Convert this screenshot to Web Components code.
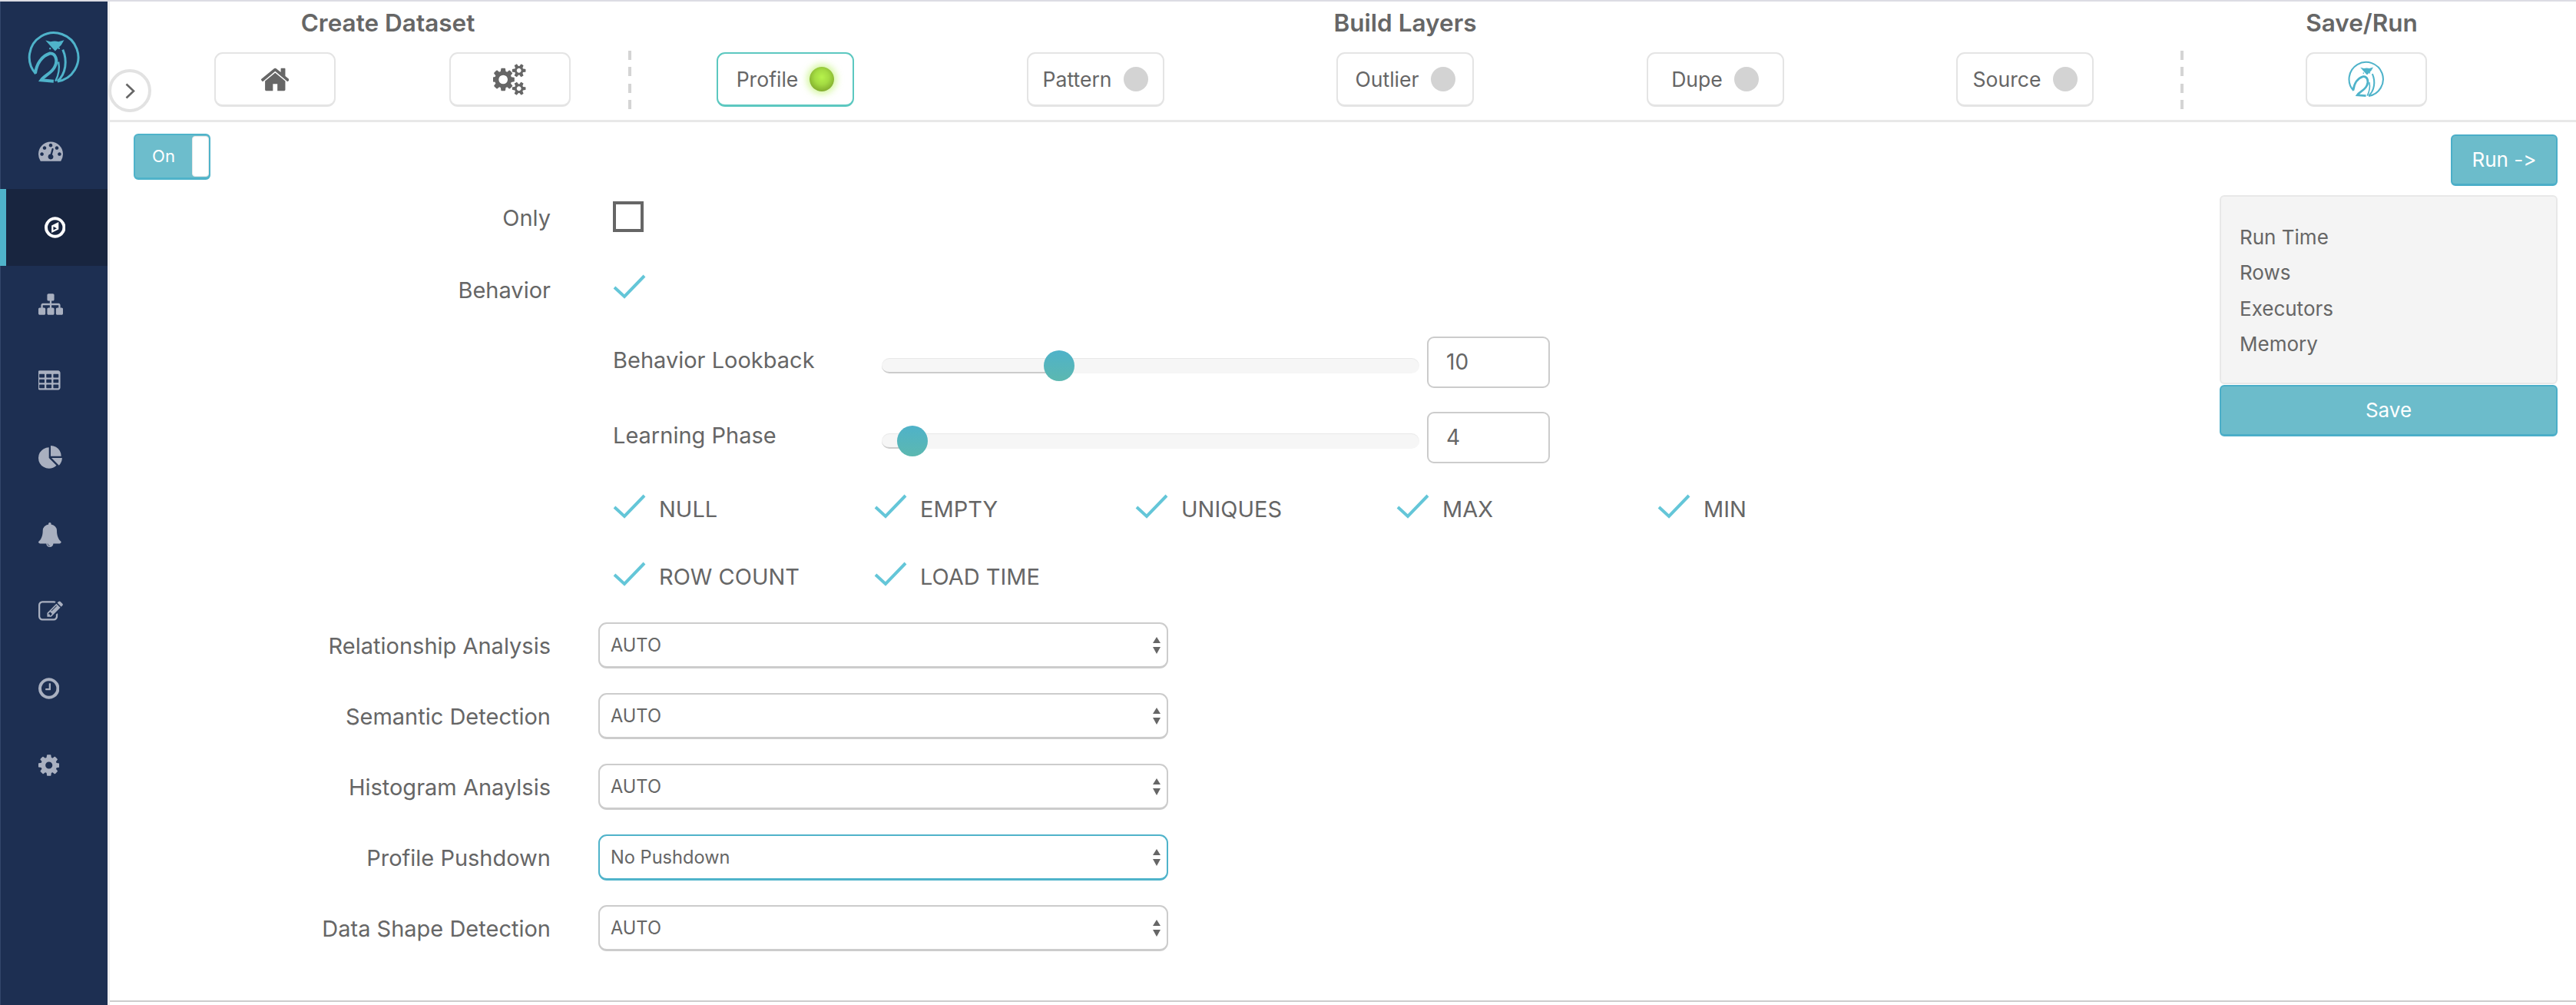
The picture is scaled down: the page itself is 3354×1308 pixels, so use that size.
<!DOCTYPE html>
<html>
<head>
<meta charset="utf-8">
<title>Profile</title>
<style>
    html, body { margin: 0; height: 100%; overflow: hidden; background: #fff; }
    body { font-family: Inter, "Liberation Sans", sans-serif; color: #666; font-variant-ligatures: none; font-feature-settings: "calt" 0, "liga" 0; }
</style>
</head>
<body>
<app-shell>
    <side-bar slot="side"></side-bar>
    <top-bar></top-bar>
    <main-body>
        <profile-form></profile-form>
        <run-panel slot="right"></run-panel>
    </main-body>
</app-shell>

<script>
// font awesome 4 glyphs, [viewBox, path, width at 1em=1792 units]
const ICONS = {
    home: ['97 0 1598 1792', 'M1472 992v480q0 26-19 45t-45 19h-384v-384h-256v384h-384q-26 0-45-19t-19-45v-480q0-1 .5-3t.5-3l575-474 575 474q1 2 1 6zm223-69l-62 74q-8 9-21 11h-3q-13 0-21-7l-692-577-692 577q-12 8-24 7-13-2-21-11l-62-74q-8-10-7-23.5t11-21.5l719-599q32-26 76-26t76 26l244 204v-195q0-14 9-23t23-9h192q14 0 23 9t9 23v408l219 182q10 8 11 21.5t-7 23.5z'],
    cogs: ['0 0 1920 1792', 'M832 896q0-106-75-181t-181-75-181 75-75 181 75 181 181 75 181-75 75-181zm768 512q0-52-38-90t-90-38-90 38-38 90q0 53 37.5 90.5t90.5 37.5 90.5-37.5 37.5-90.5zm0-1024q0-52-38-90t-90-38-90 38-38 90q0 53 37.5 90.5t90.5 37.5 90.5-37.5 37.5-90.5zm-384 421v185q0 10-7 19.5t-16 10.5l-155 24q-11 35-32 76 34 48 90 115 7 11 7 20 0 12-7 19-23 30-82.5 89.5t-78.5 59.5q-11 0-21-7l-115-90q-37 19-77 31-11 108-23 155-7 24-30 24h-186q-11 0-20-7.5t-10-17.5l-23-153q-34-10-75-31l-118 89q-7 7-20 7-11 0-21-8-144-133-144-160 0-9 7-19 10-14 41-53t47-61q-23-44-35-82l-152-24q-10-1-17-9.5t-7-19.5v-185q0-10 7-19.5t16-10.5l155-24q11-35 32-76-34-48-90-115-7-11-7-20 0-12 7-20 22-30 82-89t79-59q11 0 21 7l115 90q34-18 77-32 11-108 23-154 7-24 30-24h186q11 0 20 7.5t10 17.5l23 153q34 10 75 31l118-89q8-7 20-7 11 0 21 8 144 133 144 160 0 8-7 19-12 16-42 54t-45 60q23 48 34 82l152 23q10 2 17 10.5t7 19.5zm640 533v140q0 16-149 31-12 27-30 52 51 113 51 138 0 4-4 7-122 71-124 71-8 0-46-47t-52-68q-20 2-30 2t-30-2q-14 21-52 68t-46 47q-2 0-124-71-4-3-4-7 0-25 51-138-18-25-30-52-149-15-149-31v-140q0-16 149-31 13-29 30-52-51-113-51-138 0-4 4-7 4-2 35-20t59-34 30-16q8 0 46 46.5t52 67.5q20-2 30-2t30 2q51-71 92-112l6-2q4 0 124 70 4 3 4 7 0 25-51 138 17 23 30 52 149 15 149 31zm0-1024v140q0 16-149 31-12 27-30 52 51 113 51 138 0 4-4 7-122 71-124 71-8 0-46-47t-52-68q-20 2-30 2t-30-2q-14 21-52 68t-46 47q-2 0-124-71-4-3-4-7 0-25 51-138-18-25-30-52-149-15-149-31v-140q0-16 149-31 13-29 30-52-51-113-51-138 0-4 4-7 4-2 35-20t59-34 30-16q8 0 46 46.5t52 67.5q20-2 30-2t30 2q51-71 92-112l6-2q4 0 124 70 4 3 4 7 0 25-51 138 17 23 30 52 149 15 149 31z'],
    dashboard: ['0 0 1792 1792', 'M384 1152q0-53-37.5-90.5t-90.5-37.5-90.5 37.5-37.5 90.5 37.5 90.5 90.5 37.5 90.5-37.5 37.5-90.5zm192-448q0-53-37.5-90.5t-90.5-37.5-90.5 37.5-37.5 90.5 37.5 90.5 90.5 37.5 90.5-37.5 37.5-90.5zm428 481l101-382q6-26-7.5-48.5t-38.5-29.5-48 6.5-30 39.5l-101 382q-60 5-107 43.5t-63 98.5q-20 77 20 146t117 89 146-20 89-117q16-60-6-117t-72-91zm660-33q0-53-37.5-90.5t-90.5-37.5-90.5 37.5-37.5 90.5 37.5 90.5 90.5 37.5 90.5-37.5 37.5-90.5zm-640-640q0-53-37.5-90.5t-90.5-37.5-90.5 37.5-37.5 90.5 37.5 90.5 90.5 37.5 90.5-37.5 37.5-90.5zm448 192q0-53-37.5-90.5t-90.5-37.5-90.5 37.5-37.5 90.5 37.5 90.5 90.5 37.5 90.5-37.5 37.5-90.5zm320 448q0 261-141 483-19 29-54 29h-1402q-35 0-54-29-141-221-141-483 0-182 71-348t191-286 286-191 348-71 348 71 286 191 191 286 71 348z'],
    sitemap: ['0 0 1792 1792', 'M1792 1248v320q0 40-28 68t-68 28h-320q-40 0-68-28t-28-68v-320q0-40 28-68t68-28h96v-192h-512v192h96q40 0 68 28t28 68v320q0 40-28 68t-68 28h-320q-40 0-68-28t-28-68v-320q0-40 28-68t68-28h96v-192h-512v192h96q40 0 68 28t28 68v320q0 40-28 68t-68 28h-320q-40 0-68-28t-28-68v-320q0-40 28-68t68-28h96v-192q0-52 38-90t90-38h512v-192h-96q-40 0-68-28t-28-68v-320q0-40 28-68t68-28h320q40 0 68 28t28 68v320q0 40-28 68t-68 28h-96v192h512q52 0 90 38t38 90v192h96q40 0 68 28t28 68z'],
    table: ['128 0 1664 1792', 'M576 1376v-192q0-14-9-23t-23-9h-320q-14 0-23 9t-9 23v192q0 14 9 23t23 9h320q14 0 23-9t9-23zm0-384v-192q0-14-9-23t-23-9h-320q-14 0-23 9t-9 23v192q0 14 9 23t23 9h320q14 0 23-9t9-23zm512 384v-192q0-14-9-23t-23-9h-320q-14 0-23 9t-9 23v192q0 14 9 23t23 9h320q14 0 23-9t9-23zm-512-768v-192q0-14-9-23t-23-9h-320q-14 0-23 9t-9 23v192q0 14 9 23t23 9h320q14 0 23-9t9-23zm512 384v-192q0-14-9-23t-23-9h-320q-14 0-23 9t-9 23v192q0 14 9 23t23 9h320q14 0 23-9t9-23zm512 384v-192q0-14-9-23t-23-9h-320q-14 0-23 9t-9 23v192q0 14 9 23t23 9h320q14 0 23-9t9-23zm-512-768v-192q0-14-9-23t-23-9h-320q-14 0-23 9t-9 23v192q0 14 9 23t23 9h320q14 0 23-9t9-23zm512 384v-192q0-14-9-23t-23-9h-320q-14 0-23 9t-9 23v192q0 14 9 23t23 9h320q14 0 23-9t9-23zm0-384v-192q0-14-9-23t-23-9h-320q-14 0-23 9t-9 23v192q0 14 9 23t23 9h320q14 0 23-9t9-23zm128-320v1088q0 66-47 113t-113 47h-1344q-66 0-113-47t-47-113v-1088q0-66 47-113t113-47h1344q66 0 113 47t47 113z'],
    pie: ['0 0 1728 1792', 'M768 890l546 546q-106 108-247.5 168t-298.5 60q-209 0-385.5-103t-279.5-279.5-103-385.5 103-385.5 279.5-279.5 385.5-103v762zm187 6h773q0 157-60 298.5t-168 247.5zm709-128h-768v-768q209 0 385.5 103t279.5 279.5 103 385.5z'],
    bell: ['64 0 1664 1792', 'M912 1696q0-16-16-16-59 0-101.5-42.5t-42.5-101.5q0-16-16-16t-16 16q0 73 51.5 124.5t124.5 51.5q16 0 16-16zm816-288q0 52-38 90t-90 38h-448q0 106-75 181t-181 75-181-75-75-181h-448q-52 0-90-38t-38-90q50-42 91-88t85-119.5 74.5-158.5 50-206 19.5-260q0-152 117-282.5t307-158.5q-8-19-8-39 0-40 28-68t68-28 68 28 28 68q0 20-8 39 190 28 307 158.5t117 282.5q0 139 19.5 260t50 206 74.5 158.5 85 119.5 91 88z'],
    edit: ['0 0 1792 1792', 'M888 1184l116-116-152-152-116 116v56h96v96h56zm440-720q-16-16-33 1l-350 350q-17 17-1 33t33-1l350-350q17-17 1-33zm80 594v190q0 119-84.5 203.5t-203.5 84.5h-832q-119 0-203.5-84.5t-84.5-203.5v-832q0-119 84.5-203.5t203.5-84.5h832q63 0 117 25 15 7 18 23 3 17-9 29l-49 49q-14 14-32 8-23-6-45-6h-832q-66 0-113 47t-47 113v832q0 66 47 113t113 47h832q66 0 113-47t47-113v-126q0-13 9-22l64-64q15-15 35-7t20 29zm-96-738l288 288-672 672h-288v-288zm444 132l-92 92-288-288 92-92q28-28 68-28t68 28l152 152q28 28 28 68t-28 68z'],
    clock: ['128 0 1536 1792', 'M1024 544v448q0 14-9 23t-23 9h-320q-14 0-23-9t-9-23v-64q0-14 9-23t23-9h224v-352q0-14 9-23t23-9h64q14 0 23 9t9 23zm416 352q0-148-73-273t-198-198-273-73-273 73-198 198-73 273 73 273 198 198 273 73 273-73 198-198 73-273zm224 0q0 209-103 385.5t-279.5 279.5-385.5 103-385.5-103-279.5-279.5-103-385.5 103-385.5 279.5-279.5 385.5-103 385.5 103 279.5 279.5 103 385.5z'],
    cog: ['128 0 1536 1792', 'M1152 896q0-106-75-181t-181-75-181 75-75 181 75 181 181 75 181-75 75-181zm512-109v222q0 12-8 23t-20 13l-185 28q-19 54-39 91 35 50 107 138 10 12 10 25t-9 23q-27 37-99 108t-94 71q-12 0-26-9l-138-108q-44 23-91 38-16 136-29 186-7 28-36 28h-222q-14 0-24.5-8.5t-11.5-21.5l-28-184q-49-16-90-37l-141 107q-10 9-25 9-14 0-25-11-126-114-165-168-7-10-7-23 0-12 8-23 15-21 51-66.5t54-70.5q-27-50-41-99l-183-27q-13-2-21-12.5t-8-23.5v-222q0-12 8-23t19-13l186-28q14-46 39-92-40-57-107-138-10-12-10-24 0-10 9-23 26-36 98.5-107.5t94.5-71.5q13 0 26 10l138 107q44-23 91-38 16-136 29-186 7-28 36-28h222q14 0 24.5 8.5t11.5 21.5l28 184q49 16 90 37l142-107q9-9 24-9 13 0 25 10 129 119 165 170 7 8 7 22 0 12-8 23-15 21-51 66.5t-54 70.5q26 50 41 98l183 28q13 2 21 12.5t8 23.5z'],
    compass: ['128 0 1536 1792', 'M1152 497v542l-512 256v-542zM768 1088l256-128-256-128zM896 128a768 768 0 1 0 .01 0zM896 352a544 544 0 1 1-.01 0z']
};

function icon(name, em) {
    const [box, d] = ICONS[name];
    const [, , w, h] = box.split(' ').map(Number);
    return `<svg width="${w / 1792 * em}" height="${h / 1792 * em}" viewBox="${box}" fill="currentColor" fill-rule="evenodd"><path d="${d}"/></svg>`;
}

function sheet(css) {
    return `<style>*,:host{box-sizing:border-box}${css}</style>`;
}

class OwlLogo extends HTMLElement {
    constructor() {
        super();
        this.attachShadow({ mode: 'open' });
    }
    connectedCallback() {
        const size = this.getAttribute('size') || 69;
        this.shadowRoot.innerHTML = sheet(':host{display:block;line-height:0;color:#4fb3ca}') + `
            <svg width="${size}" height="${size}" viewBox="105 118 208 208" fill="none" stroke="currentColor" stroke-width="9">
                <path d="M137 287A96 96 0 1 1 222 317"/>
                <path d="M175 156L195 161Q212 157 226 161L248 155L237 174L213 198L191 174Z" fill="currentColor" stroke="none"/>
                <circle cx="193" cy="188" r="3.5" fill="currentColor" stroke="none"/>
                <circle cx="228" cy="187" r="3.5" fill="currentColor" stroke="none"/>
                <path d="M135 285C140 248 160 217 192 207C215 205 224 235 212 258C200 285 172 292 158 312L207 316" stroke-width="12"/>
                <path d="M243 192C262 235 255 288 222 316"/>
                <path d="M226 240C232 270 225 295 214 316" stroke-width="7"/>
            </svg>`;
    }
}
customElements.define('owl-logo', OwlLogo);

class AppShell extends HTMLElement {
    constructor() {
        super();
        this.attachShadow({ mode: 'open' });
        this.shadowRoot.innerHTML = sheet(`
            :host { display: flex; height: 1308px; border-top: 2px solid #dcdce4; }
            .main { flex: 1; min-width: 0; display: flex; flex-direction: column; position: relative;
                border-left: 3px solid #eeeef0; padding-bottom: 4px; }
        `) + `<slot name="side"></slot><div class="main"><slot></slot></div>`;
    }
}
customElements.define('app-shell', AppShell);

class SideBar extends HTMLElement {
    constructor() {
        super();
        this.attachShadow({ mode: 'open' });
    }
    connectedCallback() {
        const items = ['dashboard', 'compass', 'sitemap', 'table', 'pie', 'bell', 'edit', 'clock', 'cog'];
        this.shadowRoot.innerHTML = sheet(`
            :host { display: block; flex: none; width: 140px; background: #1d2f52; border-left: 1px solid #33466b; }
            .logo { height: 144px; padding: 38px 0 0 35px; }
            .item { height: 100px; padding-left: 49px; display: flex; align-items: center; color: #a9b0c0; }
            .item.active { background: #18253f; border-left: 8px solid #4fb3ca; margin-left: -1px; padding-left: 50px; color: #fff; }
        `) + `<div class="logo"><owl-logo size="69"></owl-logo></div>` +
            items.map(name => `<div class="item ${name === 'compass' ? 'active' : ''}">${icon(name, 32)}</div>`).join('');
    }
}
customElements.define('side-bar', SideBar);

class ToolChip extends HTMLElement {
    constructor() {
        super();
        this.attachShadow({ mode: 'open' });
        this.shadowRoot.innerHTML = sheet(`
            :host { display: flex; align-items: center; justify-content: center; gap: 15px; flex: none; width: 179px; height: 71px;
                border: 2px solid #e4e4e4; border-bottom-width: 3px; border-radius: 11px; background: #fff; color: #666; font-size: 26.6px; }
            :host([wide]) { width: 158px; }
            :host([active]) { border-color: #5cc8c0; }
            .dot { width: 32px; height: 32px; border-radius: 50%; background: #d3d3d3; }
            :host([active]) .dot { background: radial-gradient(circle at 50% 42%, #b6f24c 0, #a4dc42 38%, #6d8f22 100%);
                box-shadow: 0 0 10px 3px rgba(176, 240, 80, .6); }
            .dot[hidden] { display: none; }
        `) + `<slot></slot><span class="dot"></span>`;
    }
    connectedCallback() {
        this.shadowRoot.querySelector('.dot').hidden = this.hasAttribute('wide');
    }
}
customElements.define('tool-chip', ToolChip);

class TopBar extends HTMLElement {
    constructor() {
        super();
        this.attachShadow({ mode: 'open' });
    }
    connectedCallback() {
        this.shadowRoot.innerHTML = sheet(`
            :host { display: flex; flex: none; height: 157px; border-bottom: 3px solid #e8e8e8; position: relative; color: #666; }
            h2 { margin: 0; height: 66px; padding-top: 6px; font-size: 31.5px; line-height: 44px; font-weight: 600; text-align: center; color: #666; white-space: nowrap; }
            .group { display: flex; flex-direction: column; flex: none; }
            .row { display: flex; }
            .create { width: 675px; padding-left: 136px; }
            .create h2 { width: 452px; }
            .create .row { gap: 148px; }
            .sep { width: 4px; height: 76px; margin-top: 64px; flex: none;
                background: repeating-linear-gradient(to bottom, #d4d4d4 0 12px, transparent 12px 21.33px); }
            .build { width: 2017px; padding: 0 113px 0 111px; }
            .build .row { justify-content: space-between; }
            .save { padding-left: 159px; }
            .save h2 { width: 158px; margin-left: -6px; }
            .circle { position: absolute; left: -2px; top: 88px; width: 56px; height: 56px; border-radius: 50%;
                background: #fff; border: 4px solid #e2e2e2; display: flex; align-items: center; justify-content: center; }
        `) + `
            <div class="group create">
                <h2>Create Dataset</h2>
                <div class="row">
                    <tool-chip wide>${icon('home', 41)}</tool-chip>
                    <tool-chip wide>${icon('cogs', 41)}</tool-chip>
                </div>
            </div>
            <div class="sep"></div>
            <div class="group build">
                <h2>Build Layers</h2>
                <div class="row">
                    <tool-chip active>Profile</tool-chip>
                    <tool-chip>Pattern</tool-chip>
                    <tool-chip>Outlier</tool-chip>
                    <tool-chip>Dupe</tool-chip>
                    <tool-chip>Source</tool-chip>
                </div>
            </div>
            <div class="sep"></div>
            <div class="group save">
                <h2>Save/Run</h2>
                <div class="row"><tool-chip wide><owl-logo size="48"></owl-logo></tool-chip></div>
            </div>
            <div class="circle">
                <svg width="13" height="21" viewBox="0 0 13 21" fill="none" stroke="#666" stroke-width="2.6"><path d="M1.5 1.5L11 10.5L1.5 19.5"/></svg>
            </div>`;
    }
}
customElements.define('top-bar', TopBar);

class MainBody extends HTMLElement {
    constructor() {
        super();
        this.attachShadow({ mode: 'open' });
        this.shadowRoot.innerHTML = sheet(`
            :host { display: flex; flex: 1; min-height: 0; border-bottom: 2px solid #ccc; }
            .left { flex: 1; min-width: 0; }
            .right { width: 440px; flex: none; margin-right: 24px; }
        `) + `<div class="left"><slot></slot></div><div class="right"><slot name="right"></slot></div>`;
    }
}
customElements.define('main-body', MainBody);

class CheckMark extends HTMLElement {
    constructor() {
        super();
        this.attachShadow({ mode: 'open' });
        this.shadowRoot.innerHTML = sheet(':host{display:block;line-height:0}') + `
            <svg width="44" height="34" viewBox="0 0 44 34" fill="none" stroke="#64c6d8" stroke-width="4"><path d="M2 17L15 29L41 2"/></svg>`;
    }
}
customElements.define('check-mark', CheckMark);

class FormRow extends HTMLElement {
    constructor() {
        super();
        this.attachShadow({ mode: 'open' });
    }
    connectedCallback() {
        this.shadowRoot.innerHTML = sheet(`
            :host { display: flex; align-items: center; font-size: 29px; color: #666; }
            label { width: 574px; text-align: right; flex: none; padding-top: var(--label-pad, 3px); }
            .field { flex: none; margin-left: var(--field-gap, 81px); }
        `) + `<label>${this.getAttribute('label')}</label><div class="field"><slot></slot></div>`;
    }
}
customElements.define('form-row', FormRow);

class SliderRow extends HTMLElement {
    constructor() {
        super();
        this.attachShadow({ mode: 'open' });
    }
    connectedCallback() {
        const pos = Number(this.getAttribute('pos'));
        this.shadowRoot.innerHTML = sheet(`
            :host { display: flex; align-items: flex-start; height: 67px; padding-left: 655px; font-size: 29px; color: #666; }
            label { width: 350px; flex: none; margin-top: 11px; line-height: 40px; }
            .track { position: relative; width: 700px; height: 20px; margin-top: 28px; border-radius: 10px;
                background: #f6f6f6; box-shadow: inset 0 1px 1px rgba(0,0,0,.06); }
            .fill { position: absolute; left: 0; top: 0; height: 20px; border-radius: 10px 0 0 10px; border-bottom: 2px solid #ccc; width: ${pos + 20}px; }
            .thumb { position: absolute; left: ${pos}px; top: -10px; width: 40px; height: 40px; border-radius: 50%;
                background: linear-gradient(to bottom, #4fb2c9, #5cb8b0); }
            .input { width: 160px; height: 67px; margin-left: 10px; border: 2px solid #ccc; border-radius: 9px;
                padding-left: 23px; line-height: 63px; font-size: 28px; }
        `) + `
            <label>${this.getAttribute('label')}</label>
            <div class="track"><div class="fill"></div><div class="thumb"></div></div>
            <div class="input">${this.getAttribute('value')}</div>`;
    }
}
customElements.define('slider-row', SliderRow);

class CheckItem extends HTMLElement {
    constructor() {
        super();
        this.attachShadow({ mode: 'open' });
        this.shadowRoot.innerHTML = sheet(`
            :host { display: flex; align-items: center; width: 340px; height: 44px; font-size: 29px; color: #666; }
            check-mark { width: 60px; margin-top: -6px; }
            span { margin-top: -2px; }
        `) + `<check-mark></check-mark><span><slot></slot></span>`;
    }
}
customElements.define('check-item', CheckItem);

class SelectBox extends HTMLElement {
    constructor() {
        super();
        this.attachShadow({ mode: 'open' });
        this.shadowRoot.innerHTML = sheet(`
            :host { display: flex; align-items: center; justify-content: space-between; width: 742px; height: 60px;
                border: 2px solid #ccc; border-bottom-width: 3px; border-radius: 11px; padding: 0 8px 0 14px; font-size: 23.6px; color: #666; background: #fff; }
            :host([focused]) { border-color: #4fb3ca; }
            span:first-child { margin-top: -4px; }
            .arrows { display: flex; flex-direction: column; gap: 5px; }
            .arrows i { display: block; border-left: 5.5px solid transparent; border-right: 5.5px solid transparent; }
            .arrows i:first-child { border-bottom: 8px solid #666; }
            .arrows i:last-child { border-top: 9px solid #666; }
        `) + `<span><slot></slot></span><span class="arrows"><i></i><i></i></span>`;
    }
}
customElements.define('select-box', SelectBox);

class ProfileForm extends HTMLElement {
    constructor() {
        super();
        this.attachShadow({ mode: 'open' });
    }
    connectedCallback() {
        const selects = [
            ['Relationship Analysis', 'AUTO'],
            ['Semantic Detection', 'AUTO'],
            ['Histogram Anaylsis', 'AUTO'],
            ['Profile Pushdown', 'No Pushdown', true],
            ['Data Shape Detection', 'AUTO']
        ];
        this.shadowRoot.innerHTML = sheet(`
            :host { display: block; padding-top: 15px; }
            .toggle { display: flex; width: 100px; height: 60px; margin-left: 31px; border: 2px solid #4fb3ca; border-bottom-width: 3px; border-radius: 6px;
                background: #6dbdcc; color: #fff; font-size: 22px; }
            .toggle span { width: 74px; line-height: 54px; text-align: center; }
            .toggle i { width: 22px; margin: 1px 0; background: #fff; border: 1px solid #e8e8e8; border-radius: 4px; }
            .box { display: block; width: 40px; height: 40px; border: 4px solid #666; }
            .only { margin-top: 28px; height: 40px; }
            .behavior { margin-top: 54px; height: 40px; }
            .behavior check-mark { margin-top: -4px; }
            .s1 { margin-top: 42px; }
            .s2 { margin-top: 31px; }
            .checks { display: flex; padding-left: 655px; }
            .c1 { margin-top: 38px; }
            .c2 { margin-top: 44px; }
            .selects { display: flex; flex-direction: column; gap: 32px; margin-top: 37px; --field-gap: 62px; --label-pad: 1px; }
        `) + `
            <div class="toggle"><span>On</span><i></i></div>
            <form-row class="only" label="Only"><span class="box"></span></form-row>
            <form-row class="behavior" label="Behavior"><check-mark></check-mark></form-row>
            <slider-row class="s1" label="Behavior Lookback" pos="211" value="10"></slider-row>
            <slider-row class="s2" label="Learning Phase" pos="20" value="4"></slider-row>
            <div class="checks c1">
                <check-item>NULL</check-item><check-item>EMPTY</check-item><check-item>UNIQUES</check-item><check-item>MAX</check-item><check-item>MIN</check-item>
            </div>
            <div class="checks c2">
                <check-item>ROW COUNT</check-item><check-item>LOAD TIME</check-item>
            </div>
            <div class="selects">
                ${selects.map(([label, value, focused]) =>
                    `<form-row label="${label}"><select-box ${focused ? 'focused' : ''}>${value}</select-box></form-row>`).join('')}
            </div>`;
    }
}
customElements.define('profile-form', ProfileForm);

class RunPanel extends HTMLElement {
    constructor() {
        super();
        this.attachShadow({ mode: 'open' });
        this.shadowRoot.innerHTML = sheet(`
            :host { display: flex; flex-direction: column; align-items: flex-end; padding-top: 15.5px; color: #666; }
            .btn { display: flex; align-items: center; justify-content: center; height: 67.5px; border: 2px solid #4baec8; border-bottom-width: 3px;
                border-radius: 6px; background: #6cbccb; color: #fff; font-size: 26px; }
            .run { width: 139px; }
            .stats { width: 440px; height: 245.5px; margin-top: 12px; padding: 30px 24px 0; background: #f4f4f4;
                border: 2px solid #e8e8e8; border-radius: 6px; font-size: 26px; line-height: 46.4px; }
            .save { width: 440px; margin-top: 1px; }
        `) + `
            <div class="btn run">Run -&gt;</div>
            <div class="stats"><div>Run Time</div><div>Rows</div><div>Executors</div><div>Memory</div></div>
            <div class="btn save">Save</div>`;
    }
}
customElements.define('run-panel', RunPanel);
</script>
</body>
</html>
